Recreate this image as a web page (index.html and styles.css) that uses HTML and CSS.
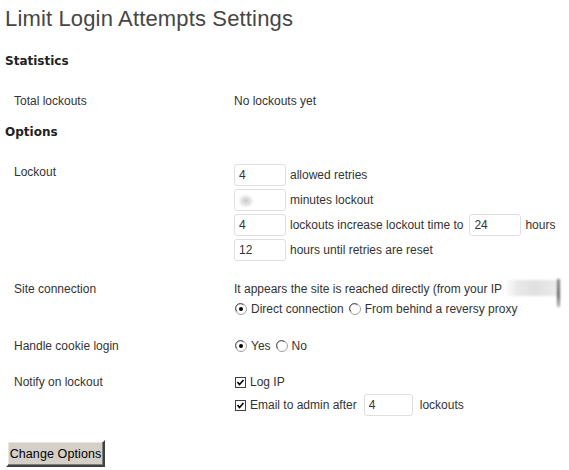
FILE: index.html
```html
<!DOCTYPE html>
<html>
<head>
<meta charset="utf-8">
<link rel="stylesheet" href="styles.css">
</head>
<body>
<div class="wrap">
  <h1 class="title">Limit Login Attempts Settings</h1>

  <h3 class="section stats-h">Statistics</h3>
  <div class="row stats-row">
    <div class="label">Total lockouts</div>
    <div class="value">No lockouts yet</div>
  </div>

  <h3 class="section options-h">Options</h3>

  <div class="row lockout-row">
    <div class="label">Lockout</div>
    <div class="value stack">
      <div class="line"><input class="field" type="text" value="4"><span>allowed retries</span></div>
      <div class="line"><input class="field blurred" type="text" value=""><span>minutes lockout</span></div>
      <div class="line"><input class="field" type="text" value="4"><span>lockouts increase lockout time to</span><input class="field" type="text" value="24"><span>hours</span></div>
      <div class="line"><input class="field" type="text" value="12"><span>hours until retries are reset</span></div>
    </div>
  </div>

  <div class="row site-row">
    <div class="label">Site connection</div>
    <div class="value">
      <div class="tline">It appears the site is reached directly (from your IP <span class="redact"></span></div>
      <div class="tline opts">
        <span class="opt"><svg class="radio" viewBox="0 0 12 12" width="12" height="12"><circle cx="6" cy="6" r="5.5" fill="#fff" stroke="#a0a0a0"/><path d="M2 8.5 A4.5 4.5 0 0 1 8.5 2" fill="none" stroke="#555" stroke-width="1"/><circle cx="6" cy="6" r="2" fill="#000"/></svg>Direct connection</span>
        <span class="opt"><svg class="radio" viewBox="0 0 12 12" width="12" height="12"><circle cx="6" cy="6" r="5.5" fill="#fff" stroke="#a0a0a0"/><path d="M2 8.5 A4.5 4.5 0 0 1 8.5 2" fill="none" stroke="#555" stroke-width="1"/></svg>From behind a reversy proxy</span>
      </div>
    </div>
  </div>

  <div class="row cookie-row">
    <div class="label">Handle cookie login</div>
    <div class="value">
      <div class="tline opts">
        <span class="opt"><svg class="radio" viewBox="0 0 12 12" width="12" height="12"><circle cx="6" cy="6" r="5.5" fill="#fff" stroke="#a0a0a0"/><path d="M2 8.5 A4.5 4.5 0 0 1 8.5 2" fill="none" stroke="#555" stroke-width="1"/><circle cx="6" cy="6" r="2" fill="#000"/></svg>Yes</span>
        <span class="opt"><svg class="radio" viewBox="0 0 12 12" width="12" height="12"><circle cx="6" cy="6" r="5.5" fill="#fff" stroke="#a0a0a0"/><path d="M2 8.5 A4.5 4.5 0 0 1 8.5 2" fill="none" stroke="#555" stroke-width="1"/></svg>No</span>
      </div>
    </div>
  </div>

  <div class="row notify-row">
    <div class="label">Notify on lockout</div>
    <div class="value">
      <div class="tline"><span class="opt"><svg class="check" viewBox="0 0 11 11" width="11" height="11"><rect x="0.5" y="0.5" width="10" height="10" fill="#fff" stroke="#404040"/><path d="M2.5 5 L4.5 7.5 L8.5 3" fill="none" stroke="#000" stroke-width="1.6"/></svg>Log IP</span></div>
      <div class="line email"><span class="opt"><svg class="check" viewBox="0 0 11 11" width="11" height="11"><rect x="0.5" y="0.5" width="10" height="10" fill="#fff" stroke="#404040"/><path d="M2.5 5 L4.5 7.5 L8.5 3" fill="none" stroke="#000" stroke-width="1.6"/></svg>Email to admin after</span><input class="field small" type="text" value="4"><span class="after">lockouts</span></div>
    </div>
  </div>

  <div class="submit">
    <button class="btn" type="button">Change Options</button>
  </div>
</div>
</body>
</html>
```

FILE: styles.css
```css
html, body {
  margin: 0;
  padding: 0;
  background: #fff;
}
body {
  font-family: "Liberation Sans", Arial, sans-serif;
  font-size: 12px;
  color: #333;
}
.wrap {
  padding-left: 5px;
}
.title {
  margin: 0;
  font-family: "Liberation Sans", Arial, sans-serif;
  font-weight: normal;
  font-size: 22px;
  letter-spacing: 0.15px;
  line-height: 37px;
  color: #464646;
}
.section {
  margin: 0;
  font-family: "DejaVu Sans", Verdana, sans-serif;
  font-weight: bold;
  font-size: 12px;
  line-height: 16px;
  color: #222;
}
.stats-h { margin-top: 16px; }
.options-h { margin-top: 13px; }

.row {
  display: grid;
  grid-template-columns: 220px 1fr;
  align-items: start;
  padding-left: 9px;
}
.label {
  line-height: 20px;
}
.value {
  line-height: 20px;
}
.stats-row { margin-top: 22px; }

.lockout-row { margin-top: 24px; }
.lockout-row .label { line-height: 16px; }
.stack {
  display: flex;
  flex-direction: column;
  gap: 3px;
}
.line {
  display: flex;
  align-items: center;
  gap: 4px;
  height: 22px;
}
.field {
  box-sizing: border-box;
  width: 52px;
  height: 22px;
  margin: 0;
  padding: 0 4px;
  border: 1px solid #dfdfdf;
  border-radius: 3px;
  background: #fff;
  font-family: "Liberation Sans", Arial, sans-serif;
  font-size: 12px;
  color: #333;
  outline: none;
}
.field.small { width: 49px; }
.line span + .field { margin-left: 2px; }
.field.blurred {
  background: radial-gradient(ellipse 8px 7px at 11px 11px, #c9c9c9 0%, #e4e4e4 55%, #fff 100%);
}

.site-row { margin-top: 18px; }
.tline {
  height: 20px;
  line-height: 20px;
  white-space: nowrap;
}
.redact {
  position: relative;
  display: inline-block;
  width: 52px;
  height: 16px;
  vertical-align: -3px;
  background: linear-gradient(90deg, rgba(255,255,255,0) 0%, #e8e8e8 25%, #e0e0e0 60%, #ececec 100%);
  filter: blur(1px);
}
.redact::after {
  content: "";
  position: absolute;
  right: -3px;
  top: -1px;
  width: 3px;
  height: 28px;
  background: linear-gradient(180deg, #888, #666 60%, #bbb);
}
.opts {
  display: flex;
  gap: 4px;
}
.opt {
  display: inline-flex;
  align-items: center;
  gap: 4px;
}
.radio {
  display: block;
  margin-left: 1px;
}
.check {
  display: block;
  margin-left: 1px;
}

.cookie-row { margin-top: 17px; }
.notify-row { margin-top: 16px; }
.email { margin-top: 2px; }
.line.email span + .field { margin-left: 3px; }
.email .after { margin-left: 3px; }

.submit {
  margin-top: 24px;
  padding-left: 1px;
}
.btn {
  box-sizing: border-box;
  width: 99px;
  height: 27px;
  margin: 0;
  padding: 0;
  background: #d4d0c8;
  border: 2px solid;
  border-color: #fff #404040 #404040 #fff;
  box-shadow: inset -1px -1px 0 #808080, inset 1px 1px 0 #e8e6e0;
  font-family: "Liberation Sans", Arial, sans-serif;
  font-size: 12.5px;
  letter-spacing: 0.1px;
  color: #000;
}
```
